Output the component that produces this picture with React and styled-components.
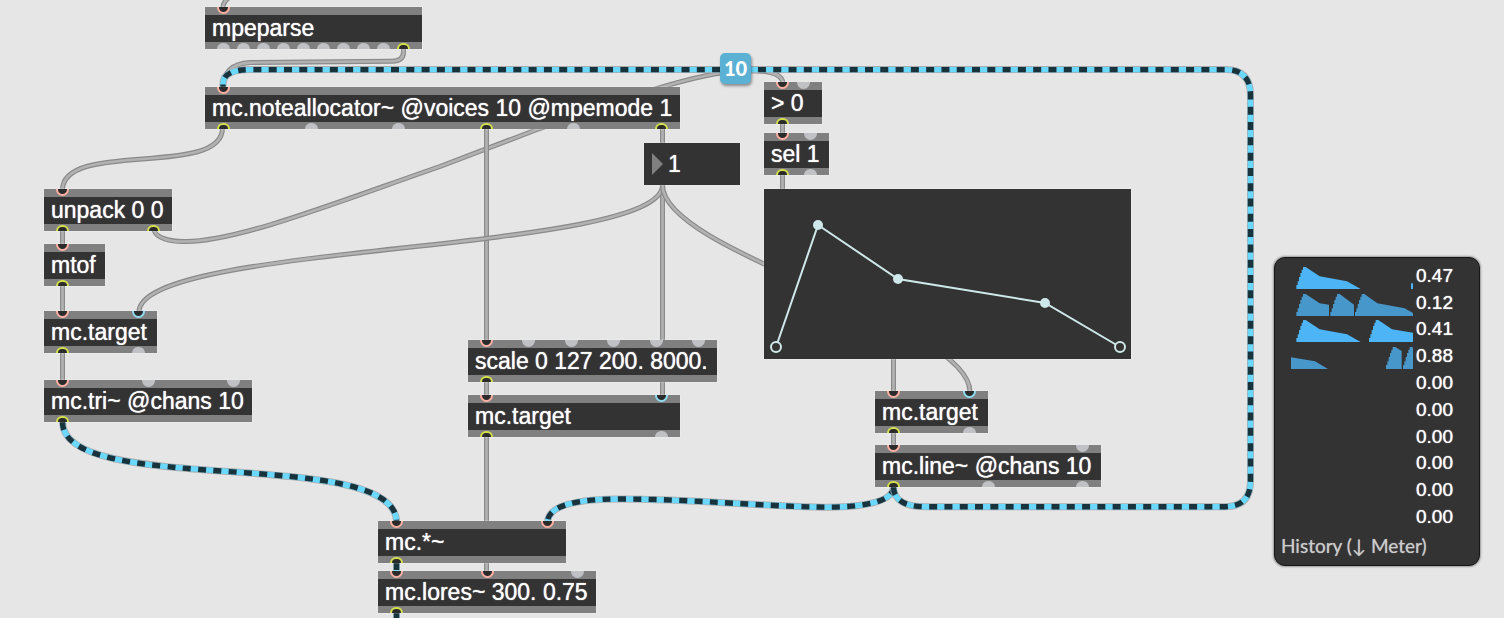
import React from 'react';
import styled, { createGlobalStyle } from 'styled-components';

const GlobalStyle = createGlobalStyle`
  *, *::before, *::after { box-sizing: border-box; }
  body { margin: 0; background: #e6e6e6; }
`;

const sans = '"Liberation Sans", Arial, sans-serif';
const lato = 'Lato, "DejaVu Sans", sans-serif';

const Patcher = styled.main`
  position: relative;
  min-height: 100vh;
  overflow: hidden;
  background: #e6e6e6;
  font-family: ${sans};
  color: #fff;
`;

const CordLayer = styled.svg`
  position: absolute;
  inset: 0;
  width: 100%;
  height: 100%;
  fill: none;
`;

const Placed = styled.div`
  position: absolute;
  left: ${(p) => p.$x}px;
  top: ${(p) => p.$y}px;
  width: ${(p) => p.$w}px;
`;

const ObjectBox = styled(Placed)`
  background: #333;
  box-shadow: 0 0 1px #fff;
`;

const Ports = styled.div`
  display: flex;
  justify-content: space-between;
  align-items: ${(p) => (p.$side === 'in' ? 'flex-start' : 'flex-end')};
  height: ${(p) => (p.$side === 'in' ? 8 : 7)}px;
  padding: 0 12px;
  background: #808080;
`;

const ringColors = { hot: '#ffb0a2', cold: '#8fdcf0', out: '#d3e04a' };

const Port = styled.span`
  width: 13px;
  height: ${(p) => (p.$side === 'in' ? 7 : 6)}px;
  border-radius: ${(p) => (p.$side === 'in' ? '0 0 7px 7px' : '7px 7px 0 0')};
  background: ${(p) => (p.$kind === 'idle' ? '#c0c1c4' : '#2b2b2b')};
  border: ${(p) => (p.$kind === 'idle' ? '0' : `2px solid ${ringColors[p.$kind]}`)};
  border-top-width: ${(p) => (p.$side === 'in' ? 0 : null)};
  border-bottom-width: ${(p) => (p.$side === 'out' ? 0 : null)};
`;

const ObjectText = styled.div`
  height: 27px;
  padding: 0 7px;
  font-size: 23px;
  line-height: 26px;
  white-space: nowrap;
  text-shadow: 0 0 1px #fff;
`;

const NumberBox = styled(Placed).attrs({ as: 'label' })`
  display: flex;
  align-items: center;
  gap: 5px;
  height: 42px;
  padding-left: 8px;
  background: #333;
  box-shadow: 0 0 1px #fff;
`;

const Triangle = styled.svg`
  flex: none;
  width: 11px;
  height: 22px;
  fill: #808080;
`;

const NumberInput = styled.input`
  flex: 1;
  min-width: 0;
  padding: 0;
  border: 0;
  outline: 0;
  background: transparent;
  color: #fff;
  font: 23px/26px ${sans};
  text-shadow: 0 0 1px #fff;
`;

const Envelope = styled(Placed)`
  height: 170px;
  background: #333;
  box-shadow: 0 0 1px #fff;
`;

const EnvelopeCurve = styled.svg`
  display: block;
  fill: none;
  stroke: #cfe8ea;
  stroke-width: 2;
`;

const ChannelBadge = styled(Placed)`
  height: 31px;
  border-radius: 5px;
  background: #5ab1d4;
  box-shadow: 1px 2px 3px rgba(0, 0, 0, 0.4);
  font: 900 20px/31px ${lato};
  text-align: center;
`;

const Meter = styled(Placed)`
  padding: 4px 7px 3px 15px;
  border: 1px solid #161616;
  border-radius: 11px;
  background: #333;
  box-shadow: 0 0 2px 1px #999;
`;

const Channels = styled.ul`
  display: grid;
  grid-auto-rows: 1fr;
  height: 268px;
  margin: 0;
  padding: 0;
  list-style: none;
`;

const Channel = styled.li`
  display: flex;
  align-items: flex-end;
  gap: 3px;
`;

const Wave = styled.svg`
  width: 123px;
  height: 22px;
  fill: ${(p) => p.$tone};
`;

const Reading = styled.span`
  font: 19px/26px ${sans};
  text-shadow: 0 0 1px #fff;
`;

const MeterMode = styled.div`
  margin-left: -9px;
  font: 19px/32px ${lato};
  color: #ccc;
  white-space: nowrap;
  text-shadow: 0 0 1px #999;
`;

const objects = [
  { text: 'mpeparse', x: 205, y: 7, w: 217, ins: ['hot'], outs: [...Array(9).fill('idle'), 'out'] },
  {
    text: 'mc.noteallocator~ @voices 10 @mpemode 1', x: 205, y: 87, w: 475,
    ins: ['hot'], outs: ['out', 'idle', 'idle', 'out', 'idle', 'out'],
  },
  { text: '> 0', x: 764, y: 82, w: 58, ins: ['hot', 'idle'], outs: ['out'] },
  { text: 'sel 1', x: 764, y: 133, w: 65, ins: ['hot', 'idle'], outs: ['out', 'idle'] },
  { text: 'unpack 0 0', x: 44, y: 189, w: 128, ins: ['hot'], outs: ['out', 'out'] },
  { text: 'mtof', x: 44, y: 244, w: 61, ins: ['hot'], outs: ['out'] },
  { text: 'mc.target', x: 44, y: 311, w: 113, ins: ['hot', 'cold'], outs: ['out', 'idle'] },
  { text: 'mc.tri~ @chans 10', x: 44, y: 380, w: 208, ins: ['hot', 'idle', 'idle'], outs: ['out'] },
  {
    text: 'scale 0 127 200. 8000.', x: 468, y: 340, w: 249,
    ins: ['hot', 'idle', 'idle', 'idle', 'idle', 'idle'], outs: ['out'],
  },
  { text: 'mc.target', x: 468, y: 395, w: 212, ins: ['hot', 'cold'], outs: ['out', 'idle'] },
  { text: 'mc.*~', x: 378, y: 521, w: 188, ins: ['hot', 'hot'], outs: ['out'] },
  { text: 'mc.lores~ 300. 0.75', x: 378, y: 571, w: 218, ins: ['hot', 'hot', 'idle'], outs: ['out'] },
  { text: 'mc.target', x: 875, y: 391, w: 113, ins: ['hot', 'cold'], outs: ['out', 'idle'] },
  { text: 'mc.line~ @chans 10', x: 875, y: 445, w: 226, ins: ['hot', 'idle'], outs: ['out', 'idle', 'idle'] },
];

const cords = [
  'M230 -3C225 0 223 3 223 8',
  'M403.5 48V52Q403.5 61 392 61.3L250 62.6Q223 64 223 89',
  'M222.5 128C222.5 178 62.5 140 62.5 190',
  'M154 230C156 238 170 242 186 241.5C240 241 340 201 440 166.5L537 129.5C615 102 690 74 738 71C765 70 783 72 783 84',
  'M486.5 128V341',
  'M486.5 381V396',
  'M486.5 436V572',
  'M662.5 128V144',
  'M662.5 184V396',
  'M662.5 185C662.5 254 139 242 139 312',
  'M662.5 185C662.5 253 970 323 970 392',
  'M62.5 230V245',
  'M62.5 285V312',
  'M62.5 352V381',
  'M782.5 123V134',
  'M782.5 174V190',
  'M893.5 358V392',
  'M893.5 432V446',
];

const signalCords = [
  'M62.5 422C62.5 498 396.5 445 396.5 522',
  'M893.5 487C893 505 850 508 815 507C760 506 690 499 620 499C575 499 548 506 547.5 522',
  'M893.5 487C893.5 500 905 506.7 925 506.7H1225Q1250.5 506.7 1250.5 481V95Q1250.5 69.6 1225 69.6H250Q223 69.6 223 84V88',
  'M396.5 562V573',
  'M396.5 612V620',
];

const breakpoints = [
  { x: 12, y: 158, open: true },
  { x: 54, y: 36 },
  { x: 134, y: 90 },
  { x: 281, y: 114 },
  { x: 356, y: 158, open: true },
];

const rise = 'v-12h4v-11h4v-13h4v-12h4v-10h4v-8h8';
const bright = '#4db4f6';
const muted = '#4897cb';

const channels = [
  { value: '0.47', tone: bright, d: `M19 66${rise}L89 28L171 43L212 66ZM363 66V49H369V66Z` },
  {
    value: '0.12', tone: muted,
    d: `M19 66${rise}L89 28L117 32V66ZM121 66${rise}L192 32V66ZM195 66${rise}L262 28L344 43L369 57V66Z`,
  },
  { value: '0.41', tone: bright, d: `M19 66${rise}L89 28L171 43L212 66ZM237 66${rise}L306 28L369 38V66Z` },
  { value: '0.88', tone: muted, d: `M3 66V31L75 43L114 66ZM288 66${rise}L335 12V66ZM339 66${rise}L369 4V66Z` },
  ...Array(6).fill({ value: '0.00', tone: bright, d: '' }),
];

function MaxObject({ text, x, y, w, ins, outs }) {
  return (
    <ObjectBox $x={x} $y={y} $w={w}>
      <Ports $side="in">
        {ins.map((kind, i) => <Port key={i} $side="in" $kind={kind} />)}
      </Ports>
      <ObjectText>{text}</ObjectText>
      <Ports $side="out">
        {outs.map((kind, i) => <Port key={i} $side="out" $kind={kind} />)}
      </Ports>
    </ObjectBox>
  );
}

function Cords() {
  return (
    <CordLayer aria-hidden="true">
      {cords.map((d) => (
        <g key={d}>
          <path d={d} stroke="#8a8a8a" strokeWidth="5" />
          <path d={d} stroke="#b2b2b2" strokeWidth="2.6" />
        </g>
      ))}
      {signalCords.map((d) => (
        <g key={d}>
          <path d={d} stroke="#a9adaf" strokeWidth="7" />
          <path d={d} stroke="#6bd8ff" strokeWidth="5.4" />
          <path d={d} stroke="#18333c" strokeWidth="5.4" strokeDasharray="8 7.29" />
        </g>
      ))}
    </CordLayer>
  );
}

export default function App() {
  return (
    <Patcher>
      <GlobalStyle />
      <Cords />
      {objects.map((o) => <MaxObject key={`${o.x}-${o.y}`} {...o} />)}
      <NumberBox $x={644} $y={143} $w={96}>
        <Triangle viewBox="0 0 11 22" aria-hidden="true"><path d="M0 0L11 11L0 22Z" /></Triangle>
        <NumberInput aria-label="Number" defaultValue="1" />
      </NumberBox>
      <Envelope $x={764} $y={189} $w={367}>
        <EnvelopeCurve width="367" height="170" role="img" aria-label="Envelope">
          <polyline points={breakpoints.map((p) => `${p.x},${p.y}`).join(' ')} />
          {breakpoints.map((p) => (
            <circle key={p.x} cx={p.x} cy={p.y} r={p.open ? 5 : 4} fill={p.open ? '#333' : '#cfe8ea'} />
          ))}
        </EnvelopeCurve>
      </Envelope>
      <ChannelBadge $x={720} $y={53} $w={31}>10</ChannelBadge>
      <Meter $x={1274} $y={257} $w={206}>
        <Channels>
          {channels.map((c, i) => (
            <Channel key={i}>
              <Wave $tone={c.tone} viewBox="0 0 369 66" aria-hidden="true"><path d={c.d} /></Wave>
              <Reading>{c.value}</Reading>
            </Channel>
          ))}
        </Channels>
        <MeterMode>History (↓ Meter)</MeterMode>
      </Meter>
    </Patcher>
  );
}
